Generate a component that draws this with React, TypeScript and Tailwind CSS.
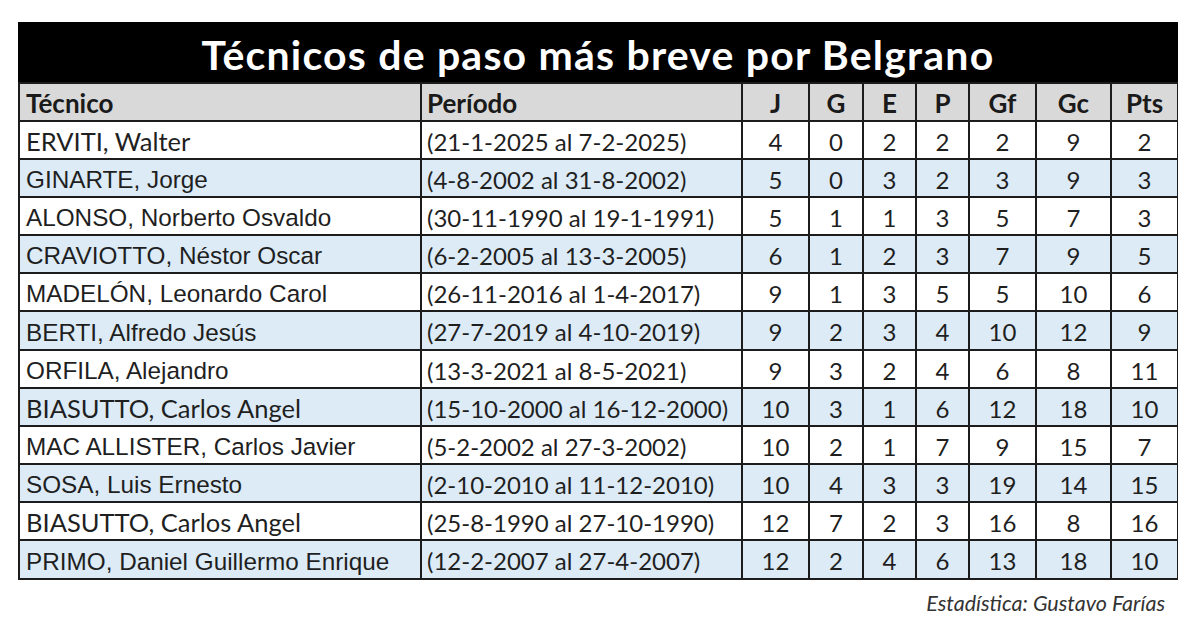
import React from "react";

type Row = {
  name: string;
  arial: boolean;
  period: string;
  nums: number[];
};

const rows: Row[] = [
  { name: "ERVITI, Walter", arial: false, period: "(21-1-2025 al 7-2-2025)", nums: [4, 0, 2, 2, 2, 9, 2] },
  { name: "GINARTE, Jorge", arial: true, period: "(4-8-2002 al 31-8-2002)", nums: [5, 0, 3, 2, 3, 9, 3] },
  { name: "ALONSO, Norberto Osvaldo", arial: true, period: "(30-11-1990 al 19-1-1991)", nums: [5, 1, 1, 3, 5, 7, 3] },
  { name: "CRAVIOTTO, Néstor Oscar", arial: true, period: "(6-2-2005 al 13-3-2005)", nums: [6, 1, 2, 3, 7, 9, 5] },
  { name: "MADELÓN, Leonardo Carol", arial: true, period: "(26-11-2016 al 1-4-2017)", nums: [9, 1, 3, 5, 5, 10, 6] },
  { name: "BERTI, Alfredo Jesús", arial: true, period: "(27-7-2019 al 4-10-2019)", nums: [9, 2, 3, 4, 10, 12, 9] },
  { name: "ORFILA, Alejandro", arial: true, period: "(13-3-2021 al 8-5-2021)", nums: [9, 3, 2, 4, 6, 8, 11] },
  { name: "BIASUTTO, Carlos Angel", arial: false, period: "(15-10-2000 al 16-12-2000)", nums: [10, 3, 1, 6, 12, 18, 10] },
  { name: "MAC ALLISTER, Carlos Javier", arial: true, period: "(5-2-2002 al 27-3-2002)", nums: [10, 2, 1, 7, 9, 15, 7] },
  { name: "SOSA, Luis Ernesto", arial: true, period: "(2-10-2010 al 11-12-2010)", nums: [10, 4, 3, 3, 19, 14, 15] },
  { name: "BIASUTTO, Carlos Angel", arial: false, period: "(25-8-1990 al 27-10-1990)", nums: [12, 7, 2, 3, 16, 8, 16] },
  { name: "PRIMO, Daniel Guillermo Enrique", arial: true, period: "(12-2-2007 al 27-4-2007)", nums: [12, 2, 4, 6, 13, 18, 10] },
];

const headers = ["J", "G", "E", "P", "Gf", "Gc", "Pts"];

const LATO = "font-['Lato','Open_Sans',sans-serif]";
const ARIAL = "font-['Liberation_Sans',Arial,sans-serif]";

export default function App() {
  return (
    <div className="w-[1200px] h-[639px] bg-white overflow-hidden">
      <div className="pt-[22px] pl-[18px]">
        <div className="w-[1160px] bg-[#1c1c1c]">
          <div className="h-[60px] bg-black flex items-center justify-center">
            <span
              className={`${LATO} font-bold text-white text-[41px] leading-none tracking-[1.2px] [text-shadow:0_0_3px_rgba(0,0,0,0.9)] pt-[5px]`}
            >
              Técnicos de paso más breve por Belgrano
            </span>
          </div>
          <div className="grid grid-cols-[400px_319px_65px_52px_51px_51px_65px_73px_65px] grid-rows-[36px_36px_36px_36px_36px_36px_37px_36px_36px_36px_36px_36px_37px] gap-[2px] px-[2px] py-[2px]">
            <div className={`bg-[#d9d9d9] ${LATO} font-bold text-[26px] text-[#1a1a1a] flex items-center pl-[6px] pt-[2px]`}>
              Técnico
            </div>
            <div className={`bg-[#d9d9d9] ${LATO} font-bold text-[26px] text-[#1a1a1a] flex items-center pl-[5px] pt-[2px]`}>
              Período
            </div>
            {headers.map((h) => (
              <div
                key={h}
                className={`bg-[#d9d9d9] ${LATO} font-bold text-[26px] text-[#1a1a1a] flex items-center justify-center pt-[2px]`}
              >
                {h}
              </div>
            ))}
            {rows.map((r, i) => {
              const bg = i % 2 === 0 ? "bg-white" : "bg-[#dcebf6]";
              return (
                <React.Fragment key={i}>
                  <div
                    className={`${bg} ${r.arial ? `${ARIAL} text-[24.3px] pt-[5px]` : `${LATO} text-[25.5px] pt-[3px]`} text-[#1f1f1f] flex items-center pl-[6px] whitespace-nowrap`}
                  >
                    {r.name}
                  </div>
                  <div className={`${bg} ${LATO} text-[24px] text-[#1f1f1f] flex items-center pl-[5px] pt-[3px] whitespace-nowrap`}>
                    {r.period}
                  </div>
                  {r.nums.map((n, j) => (
                    <div
                      key={j}
                      className={`${bg} ${LATO} text-[24px] text-[#1f1f1f] flex items-center justify-center pt-[3px]`}
                    >
                      {n}
                    </div>
                  ))}
                </React.Fragment>
              );
            })}
          </div>
        </div>
        <div className="w-[1160px] flex justify-end pr-[13px] mt-[13px]">
          <span className={`${LATO} italic text-[21.5px] text-[#333] leading-none`}>
            Estadística: Gustavo Farías
          </span>
        </div>
      </div>
    </div>
  );
}
